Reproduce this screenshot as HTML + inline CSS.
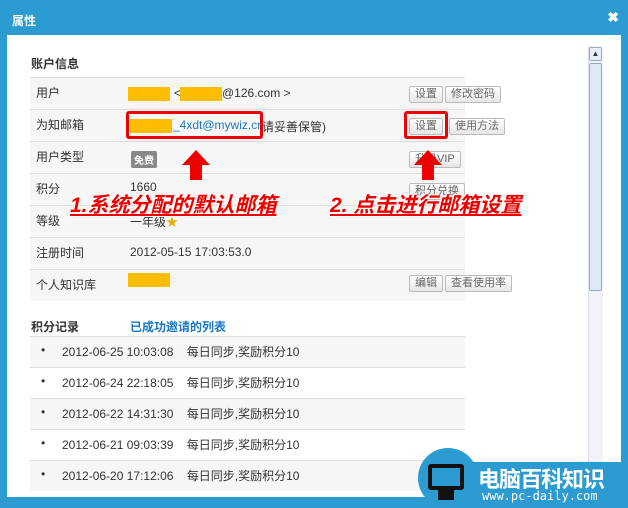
<!DOCTYPE html>
<html><head><meta charset="utf-8"><style>
*{margin:0;padding:0;box-sizing:border-box}
body{width:628px;height:505px;overflow:hidden;background:#2c9bd2;font-family:"Liberation Sans","Noto Sans CJK SC",sans-serif;font-size:12px;color:#333;position:relative}
.title{position:absolute;left:12px;top:12px;color:#fff;font-size:12px;font-weight:bold}
.close{position:absolute;right:9px;top:9px;color:#fff;font-size:14px;font-weight:bold}
.content{position:absolute;left:7px;top:35px;width:614px;height:462px;background:#fff}
.a{position:absolute}
.row{position:absolute;left:30px;width:435px;height:32px;border-top:1px solid #ddd}
.g{background:#f6f6f6}
.lab{position:absolute;left:6px;top:6px}
.btn{position:absolute;height:17px;border:1px solid #bbb;border-radius:2px;background:linear-gradient(#fff,#e6e6e6);font-size:11px;color:#666;line-height:15px;padding:0 5px}
.y{position:absolute;background:#fdbd00;height:14px}
.red{border:3px solid #e00;border-radius:3px;position:absolute}
.arrow{position:absolute;width:0;height:0;border-left:14px solid transparent;border-right:14px solid transparent;border-bottom:15px solid #e00}
.stem{position:absolute;width:12px;background:#e00}
.big{position:absolute;color:#e00;font-size:21px;font-weight:bold;font-style:italic;text-decoration:underline;text-shadow:1px 1px 0 #fff,-1px -1px 0 #fff}
</style></head><body>
<div class="title">属性</div><div class="close">✖</div>
<div class="content"></div>
<div class="a" style="left:31px;top:55px;font-weight:bold">账户信息</div>
<div class="row g" style="top:77px"><span class="lab">用户</span></div>
<div class="row g" style="top:109px"><span class="lab">为知邮箱</span></div>
<div class="row g" style="top:141px"><span class="lab">用户类型</span></div>
<div class="row g" style="top:173px"><span class="lab">积分</span><span class="a" style="left:100px;top:6px">1660</span></div>
<div class="row g" style="top:205px"><span class="lab">等级</span><span class="a" style="left:100px;top:7px">一年级<span style="color:#e9b000">★</span></span></div>
<div class="row g" style="top:237px"><span class="lab">注册时间</span><span class="a" style="left:100px;top:7px">2012-05-15 17:03:53.0</span></div>
<div class="row g" style="top:269px;height:32px"><span class="lab">个人知识库</span></div>
<div class="y" style="left:128px;top:87px;width:42px"></div>
<div class="a" style="left:174px;top:86px">&lt;</div>
<div class="y" style="left:180px;top:87px;width:42px"></div>
<div class="a" style="left:222px;top:86px">@126.com &gt;</div>
<div class="y" style="left:130px;top:119px;width:42px"></div>
<div class="a" style="left:173px;top:118px;color:#1a78c2">_4xdt@mywiz.cn</div>
<div class="a" style="left:262px;top:118px">请妥善保管)</div>
<div class="red" style="left:126px;top:111px;width:137px;height:28px"></div>
<div class="a" style="left:131px;top:151px;background:#888;color:#fff;font-size:10px;font-weight:bold;padding:1px 3px;border-radius:2px">免费</div>
<div class="y" style="left:128px;top:273px;width:42px"></div>
<div class="btn" style="left:409px;top:86px">设置</div>
<div class="btn" style="left:445px;top:86px">修改密码</div>
<div class="btn" style="left:409px;top:118px">设置</div>
<div class="btn" style="left:449px;top:118px">使用方法</div>
<div class="red" style="left:404px;top:111px;width:44px;height:28px"></div>
<div class="btn" style="left:409px;top:151px">升级VIP</div>
<div class="btn" style="left:409px;top:183px">积分兑换</div>
<div class="btn" style="left:409px;top:275px">编辑</div>
<div class="btn" style="left:445px;top:275px">查看使用率</div>
<div class="arrow" style="left:182px;top:150px"></div><div class="stem" style="left:190px;top:165px;height:15px"></div>
<div class="arrow" style="left:414px;top:150px"></div><div class="stem" style="left:422px;top:165px;height:15px"></div>
<div class="big" style="left:70px;top:189px">1.系统分配的默认邮箱</div>
<div class="big" style="left:330px;top:189px">2. 点击进行邮箱设置</div>
<div class="a" style="left:31px;top:318px;font-weight:bold">积分记录</div>
<div class="a" style="left:130px;top:318px;font-weight:bold;color:#1a78c2">已成功邀请的列表</div>
<div class="row g" style="top:336px;height:31px"><span class="a" style="left:11px;top:6px">•</span><span class="a" style="left:32px;top:6px">2012-06-25 10:03:08 &nbsp;&nbsp; 每日同步,奖励积分10</span></div>
<div class="row" style="top:367px;height:31px"><span class="a" style="left:11px;top:6px">•</span><span class="a" style="left:32px;top:6px">2012-06-24 22:18:05 &nbsp;&nbsp; 每日同步,奖励积分10</span></div>
<div class="row g" style="top:398px;height:31px"><span class="a" style="left:11px;top:6px">•</span><span class="a" style="left:32px;top:6px">2012-06-22 14:31:30 &nbsp;&nbsp; 每日同步,奖励积分10</span></div>
<div class="row" style="top:429px;height:31px"><span class="a" style="left:11px;top:6px">•</span><span class="a" style="left:32px;top:6px">2012-06-21 09:03:39 &nbsp;&nbsp; 每日同步,奖励积分10</span></div>
<div class="row g" style="top:460px;height:31px"><span class="a" style="left:11px;top:6px">•</span><span class="a" style="left:32px;top:6px">2012-06-20 17:12:06 &nbsp;&nbsp; 每日同步,奖励积分10</span></div>
<div class="a" style="left:588px;top:46px;width:15px;height:451px;background:#f0f4fa;border-left:1px solid #dde"></div>
<div class="a" style="left:589px;top:47px;width:13px;height:14px;border:1px solid #9ab;border-radius:2px;background:#e6eef8;font-size:8px;text-align:center;line-height:12px">▲</div>
<div class="a" style="left:589px;top:63px;width:13px;height:228px;border:1px solid #9ab;border-radius:2px;background:#dde8f5"></div>
<div class="a" style="left:418px;top:448px;width:60px;height:60px;border-radius:50%;background:#2c9bd2"></div>
<div class="a" style="left:468px;top:462px;width:160px;height:43px;background:#2c9bd2"></div>
<div class="a" style="left:428px;top:464px;width:36px;height:26px;background:#111;border-radius:3px"><div style="margin:4px;height:18px;background:#2c9bd2"></div></div>
<div class="a" style="left:438px;top:490px;width:16px;height:10px;background:#111"></div>
<div class="a" style="left:478px;top:462px;color:#fff;font-weight:bold;font-size:22px;letter-spacing:-1px">电脑百科知识</div>
<div class="a" style="left:482px;top:489px;color:#fff;font-size:12px;font-family:'DejaVu Sans Mono',monospace">www.pc-daily.com</div>
</body></html>
